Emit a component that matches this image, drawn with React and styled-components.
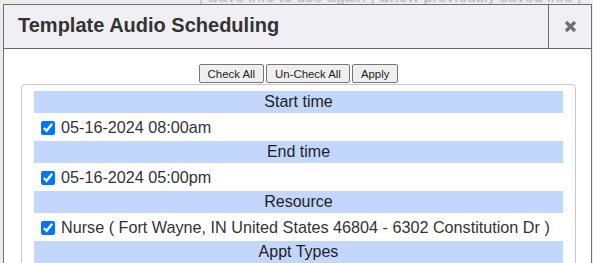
import styled, { createGlobalStyle } from 'styled-components';

const GlobalStyle = createGlobalStyle`
  html, body {
    margin: 0;
    padding: 0;
    overflow: hidden;
    background: #ececec;
    font-family: "Liberation Sans", Arial, sans-serif;
  }
`;

const sections = [
  { title: 'Start time', items: ['05-16-2024 08:00am'] },
  { title: 'End time', items: ['05-16-2024 05:00pm'] },
  { title: 'Resource', items: ['Nurse ( Fort Wayne, IN United States 46804 - 6302 Constitution Dr )'] },
  { title: 'Appt Types', items: ['Audiology Evaluation'] },
];

const App = () => {
  return (
    <Page>
      <GlobalStyle />
      <PageLinks>| Save info to use again | Show previously saved info |</PageLinks>

      <Dialog>
        <Header>
          <Title>Template Audio Scheduling</Title>
          <CloseButton aria-label="Close">
            <svg width="13" height="13" viewBox="0 0 13 13">
              <path d="M2 2 L11 11 M11 2 L2 11" stroke="#707070" strokeWidth="3.2" strokeLinecap="butt" />
            </svg>
          </CloseButton>
        </Header>

        <Body>
          <Toolbar>
            <SmallButton>Check All</SmallButton>
            <SmallButton>Un-Check All</SmallButton>
            <SmallButton>Apply</SmallButton>
          </Toolbar>

          <Box>
            {sections.map((section) => (
              <div key={section.title}>
                <Band>{section.title}</Band>
                {section.items.map((item) => (
                  <Row key={item}>
                    <Check type="checkbox" defaultChecked />
                    <span>{item}</span>
                  </Row>
                ))}
              </div>
            ))}
          </Box>
        </Body>
      </Dialog>
    </Page>
  );
};

export default App;

const Page = styled.div`
  position: relative;
  width: 593px;
  height: 263px;
  overflow: hidden;
`;

const PageLinks = styled.div`
  margin-top: -12px;
  padding-left: 199px;
  font-size: 16px;
  line-height: 18px;
  color: #b8b8b8;
  white-space: nowrap;
`;

const Dialog = styled.div`
  position: absolute;
  left: 3px;
  top: 4px;
  width: 589px;
  box-sizing: border-box;
  border: 1px solid #707070;
  background: #fff;
`;

const Header = styled.div`
  display: flex;
  height: 44px;
  box-sizing: border-box;
  border-bottom: 1px solid #6a6a6a;
  background: #efeff4;
`;

const Title = styled.h2`
  flex: 1;
  margin: 0;
  padding: 0 0 2px 14px;
  display: flex;
  align-items: center;
  font-size: 20px;
  font-weight: bold;
  color: #333;
`;

const CloseButton = styled.div`
  width: 42px;
  border-left: 1px solid #6a6a6a;
  display: flex;
  align-items: center;
  justify-content: center;
  padding-bottom: 1px;
`;

const Body = styled.div`
  padding: 15px 15px 0 17px;
`;

const Toolbar = styled.div`
  display: flex;
  justify-content: center;
  gap: 2px;
  margin-bottom: 1px;
`;

const SmallButton = styled.button`
  height: 19px;
  padding: 0 8px;
  font-family: "Liberation Sans", Arial, sans-serif;
  font-size: 11.4px;
  color: #222;
  background: #efefef;
  border: 1px solid #767676;
  border-radius: 2px;
`;

const Box = styled.div`
  border: 1px solid #c8c8c8;
  border-radius: 4px;
  padding: 6px 12px;
`;

const Band = styled.div`
  height: 22px;
  line-height: 22px;
  text-align: center;
  background: #c3d6fb;
  font-size: 16px;
  color: #1e1e1e;
`;

const Row = styled.label`
  display: flex;
  align-items: center;
  gap: 6px;
  height: 28px;
  padding-left: 7px;
  font-size: 16.2px;
  color: #333;
`;

const Check = styled.input`
  margin: 1px 0 0 0;
  width: 14px;
  height: 14px;
`;
